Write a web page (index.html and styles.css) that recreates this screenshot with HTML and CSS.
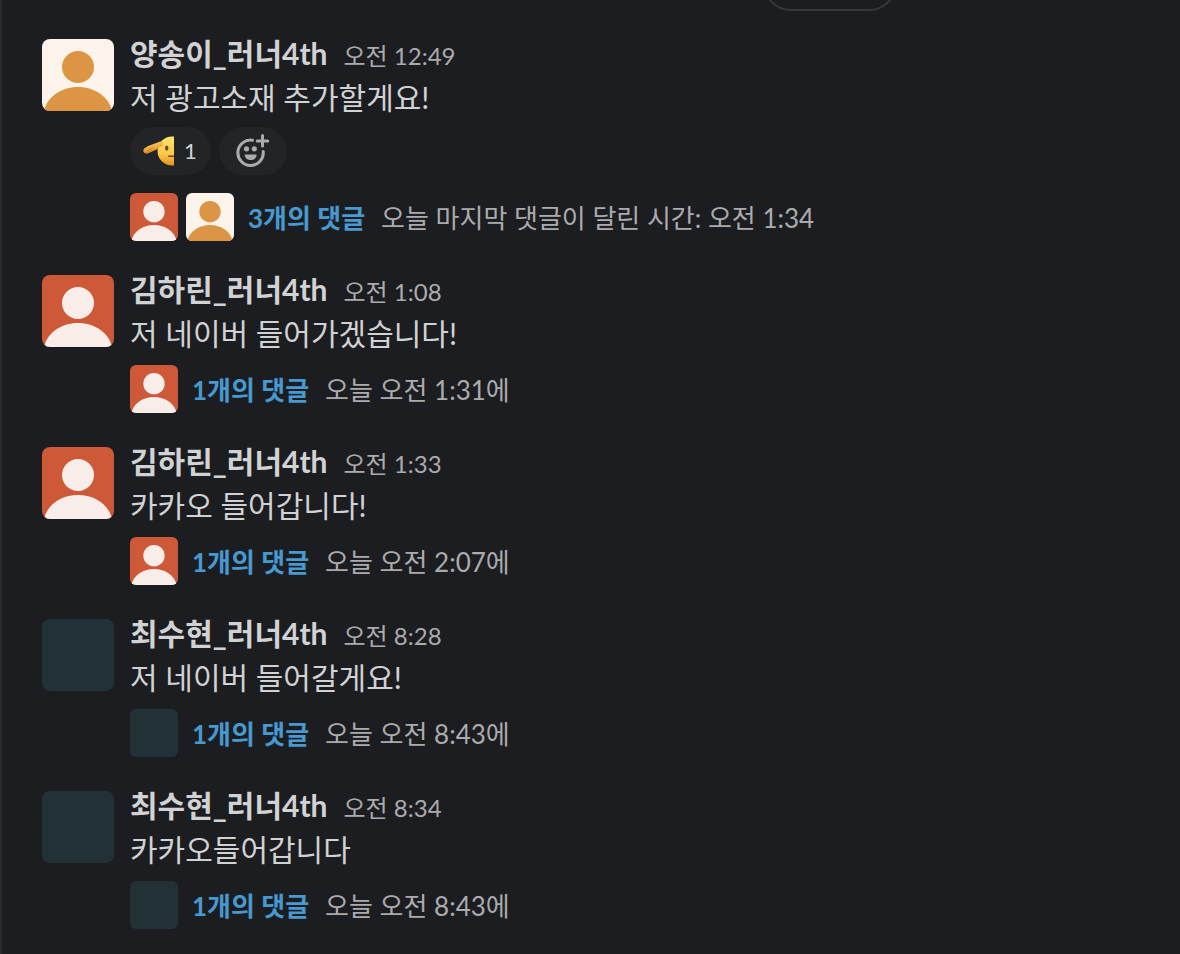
FILE: index.html
```
<!DOCTYPE html>
<html lang="ko">
  <head>
    <meta charset="UTF-8" />
    <meta name="viewport" content="width=device-width, initial-scale=1.0" />
    <title>러너4th</title>
    <link rel="stylesheet" href="styles.css">
  </head>
  <body>
    <svg class="symbols" aria-hidden="true">
      <symbol id="person" viewBox="0 0 72 72">
        <circle cx="36" cy="28" r="16" />
        <path d="M2 72C5 58 19 48 36 48S67 58 70 72Z" />
      </symbol>
    </svg>
    <button class="date-pill" aria-label="날짜로 이동"></button>
    <main class="channel">
      <article class="message">
        <div class="avatar avatar-cream"><svg><use href="#person" /></svg></div>
        <div class="content">
          <header class="message-header">
            <button class="sender">양송이_러너4th</button>
            <a class="time" href="#">오전 12:49</a>
          </header>
          <p class="text">저 광고소재 추가할게요!</p>
          <div class="reactions">
            <button class="reaction">
              <svg class="emoji" viewBox="0 0 32 32" aria-hidden="true">
                <defs>
                  <linearGradient id="face" x1="0" y1="0" x2="0" y2="1">
                    <stop offset="0" stop-color="#fde56a" />
                    <stop offset="0.6" stop-color="#fbc94a" />
                    <stop offset="1" stop-color="#e58f22" />
                  </linearGradient>
                  <linearGradient id="hand" x1="0" y1="0" x2="0.4" y2="1">
                    <stop offset="0" stop-color="#fbd870" />
                    <stop offset="0.6" stop-color="#f0ad40" />
                    <stop offset="1" stop-color="#c87818" />
                  </linearGradient>
                </defs>
                <circle cx="30" cy="16" r="15" fill="url(#face)" />
                <ellipse cx="24.500" cy="13" rx="1.800" ry="2.700" fill="#70451b" />
                <path d="M26.500 21.500h5" stroke="#70451b" stroke-width="1.500" stroke-linecap="round" />
                <path d="M2 13C5 10.500 12 8.500 17 6.500c2.500-.8 4.500.6 4 2.700-.4 1.500-2 2.300-3.800 2.600-2.200 2.800-5.700 3.700-8.700 5.200-2 1-4.500 2.200-6.500 1.200C-.2 17-.2 14.500 2 13Z" fill="url(#hand)" />
                <path d="M5 15l5-2.200" stroke="#c97a20" stroke-width="0.800" stroke-linecap="round" fill="none" />
              </svg>
              <span>1</span>
            </button>
            <button class="reaction reaction-add" aria-label="반응 추가">
              <svg class="smile" viewBox="0 0 34 34" aria-hidden="true">
                <g fill="none" stroke="#ababad" stroke-width="3" stroke-linecap="round">
                  <path d="M16.500 6.200A12.700 12.700 0 1 0 27.200 17.500" />
                  <path d="M26.500 1.500v10.500M21.200 7h10.600" />
                </g>
                <g fill="#ababad">
                  <circle cx="10.500" cy="14.800" r="2.600" />
                  <circle cx="18.300" cy="14.800" r="2.600" />
                  <path d="M9.300 20.500h10.500c.6 0 .9.400.8 1C19.900 24.600 17.600 26 14.600 26s-5.300-1.400-6-4.500c-.1-.6.1-1 .7-1Z" />
                </g>
              </svg>
            </button>
          </div>
          <div class="thread">
            <div class="avatar avatar-small avatar-red"><svg><use href="#person" /></svg></div>
            <div class="avatar avatar-small avatar-cream"><svg><use href="#person" /></svg></div>
            <a class="replies" href="#">3개의 댓글</a>
            <span class="last-reply">오늘 마지막 댓글이 달린 시간: 오전 1:34</span>
          </div>
        </div>
      </article>

      <article class="message">
        <div class="avatar avatar-red"><svg><use href="#person" /></svg></div>
        <div class="content">
          <header class="message-header">
            <button class="sender">김하린_러너4th</button>
            <a class="time" href="#">오전 1:08</a>
          </header>
          <p class="text">저 네이버 들어가겠습니다!</p>
          <div class="thread">
            <div class="avatar avatar-small avatar-red"><svg><use href="#person" /></svg></div>
            <a class="replies" href="#">1개의 댓글</a>
            <span class="last-reply">오늘 오전 1:31에</span>
          </div>
        </div>
      </article>

      <article class="message">
        <div class="avatar avatar-red"><svg><use href="#person" /></svg></div>
        <div class="content">
          <header class="message-header">
            <button class="sender">김하린_러너4th</button>
            <a class="time" href="#">오전 1:33</a>
          </header>
          <p class="text">카카오 들어갑니다!</p>
          <div class="thread">
            <div class="avatar avatar-small avatar-red"><svg><use href="#person" /></svg></div>
            <a class="replies" href="#">1개의 댓글</a>
            <span class="last-reply">오늘 오전 2:07에</span>
          </div>
        </div>
      </article>

      <article class="message">
        <div class="avatar"></div>
        <div class="content">
          <header class="message-header">
            <button class="sender">최수현_러너4th</button>
            <a class="time" href="#">오전 8:28</a>
          </header>
          <p class="text">저 네이버 들어갈게요!</p>
          <div class="thread">
            <div class="avatar avatar-small"></div>
            <a class="replies" href="#">1개의 댓글</a>
            <span class="last-reply">오늘 오전 8:43에</span>
          </div>
        </div>
      </article>

      <article class="message">
        <div class="avatar"></div>
        <div class="content">
          <header class="message-header">
            <button class="sender">최수현_러너4th</button>
            <a class="time" href="#">오전 8:34</a>
          </header>
          <p class="text">카카오들어갑니다</p>
          <div class="thread">
            <div class="avatar avatar-small"></div>
            <a class="replies" href="#">1개의 댓글</a>
            <span class="last-reply">오늘 오전 8:43에</span>
          </div>
        </div>
      </article>
    </main>
  </body>
</html>
```

FILE: styles.css
```
* {
  box-sizing: border-box;
}

body {
  margin: 0;
  background: #1c1d21;
  color: #d1d2d3;
  font-family: Lato, "Noto Sans CJK KR", sans-serif;
  font-size: 30px;
  line-height: 44px;
}

button {
  padding: 0;
  border: 0;
  background: none;
  color: inherit;
  font: inherit;
  cursor: pointer;
}

a {
  text-decoration: none;
}

.symbols {
  position: absolute;
  width: 0;
  height: 0;
}

.date-pill {
  position: absolute;
  top: -45px;
  left: 763px;
  width: 134px;
  height: 56px;
  border: 2px solid #37393d;
  border-radius: 28px;
}

.channel {
  min-height: 100vh;
  padding-top: 23px;
  border-left: 2px solid #2a2b2f;
}

.message {
  display: flex;
  gap: 16px;
  padding: 8px 40px 10px;
}

.avatar {
  flex: none;
  width: 72px;
  height: 72px;
  margin-top: 8px;
  border-radius: 8px;
  background: #213135;
  overflow: hidden;
}

.avatar svg {
  display: block;
  width: 100%;
  height: 100%;
}

.avatar-small {
  width: 48px;
  height: 48px;
  margin: 0 8px 0 0;
  border-radius: 6px;
}

.avatar-cream {
  background: #fcf4ea;
  fill: #dc9544;
}

.avatar-red {
  background: #ce5938;
  fill: #f8ede9;
}

.content {
  flex: 1;
  min-width: 0;
}

.message-header {
  display: flex;
  align-items: baseline;
  gap: 16px;
  height: 44px;
}

.sender {
  font-weight: 700;
}

.time {
  color: #ababad;
  font-size: 24px;
}

.text {
  margin: 0;
}

.reactions {
  display: flex;
  gap: 8px;
  padding: 8px 0;
}

.reaction {
  display: flex;
  align-items: center;
  gap: 10px;
  height: 48px;
  padding: 0 14px 0 13px;
  border-radius: 24px;
  background: #222427;
  font-size: 22px;
}

.reaction-add {
  padding: 0 17px;
}

.emoji {
  width: 31px;
  height: 32px;
}

.smile {
  width: 34px;
  height: 34px;
}

.thread {
  display: flex;
  align-items: flex-start;
  padding: 10px 0 6px;
  font-size: 26px;
  line-height: 50px;
}

.replies {
  margin: 0 16px 0 6px;
  color: #4799cf;
  font-weight: 700;
}

.last-reply {
  color: #ababad;
}
```
